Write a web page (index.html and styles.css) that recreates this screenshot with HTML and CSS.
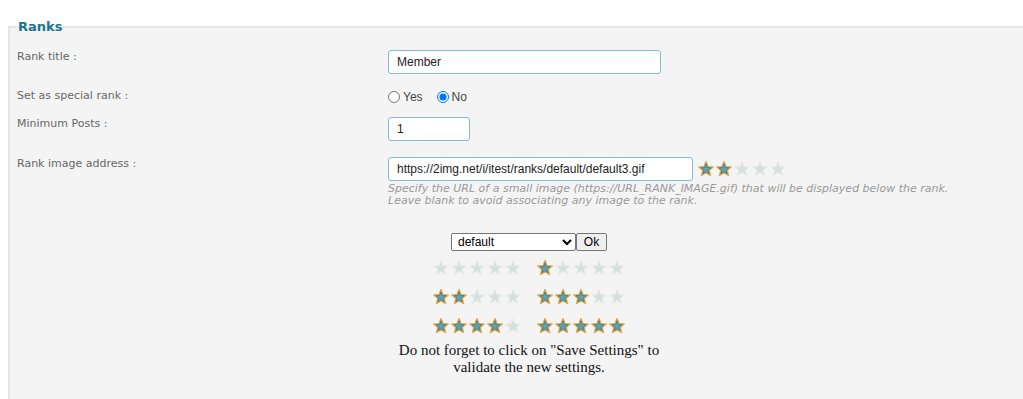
FILE: index.html
```html
<!DOCTYPE html>
<html lang="en">
<head>
<meta charset="utf-8">
<title>Ranks</title>
<link rel="stylesheet" href="styles.css">
</head>
<body>
<svg class="defs" width="0" height="0" aria-hidden="true">
  <defs>
    <symbol id="s-on" viewBox="0 0 18 16">
      <polygon points="9,0.8 10.88,5.71 16.13,5.98 12.04,9.29 13.41,14.37 9,11.5 4.59,14.37 5.96,9.29 1.87,5.98 7.12,5.71" fill="#4d93a9" stroke="#e2a94a" stroke-width="1.6" stroke-linejoin="round"/>
      <polygon points="9,2.6 10.3,6.5 14.2,6.7 11.2,9.1 12.2,12.8 9,10.7 5.8,12.8 6.8,9.1 3.8,6.7 7.7,6.5" fill="#5aa3b8" stroke="#3f6f78" stroke-width="0.6" stroke-linejoin="round"/>
    </symbol>
    <symbol id="s-off" viewBox="0 0 18 16">
      <polygon points="9,0.8 10.88,5.71 16.13,5.98 12.04,9.29 13.41,14.37 9,11.5 4.59,14.37 5.96,9.29 1.87,5.98 7.12,5.71" fill="#d3dfe1" stroke="#e6ebe4" stroke-width="1.2" stroke-linejoin="round"/>
    </symbol>
  </defs>
</svg>
<div class="page">
  <fieldset class="panel">
    <legend class="panel-title">Ranks</legend>
    <div class="form">
      <div class="row row-title">
        <div class="label">Rank title :</div>
        <div class="value"><input class="field field-title" type="text" value="Member"></div>
      </div>
      <div class="row row-special">
        <div class="label">Set as special rank :</div>
        <div class="value radios">
          <label class="radio"><input type="radio" name="special"> Yes</label>
          <label class="radio"><input type="radio" name="special" checked> No</label>
        </div>
      </div>
      <div class="row row-posts">
        <div class="label">Minimum Posts :</div>
        <div class="value"><input class="field field-posts" type="text" value="1"></div>
      </div>
      <div class="row row-image">
        <div class="label">Rank image address :</div>
        <div class="value">
          <div class="url-line">
            <input class="field field-url" type="text" value="https://2img.net/i/itest/ranks/default/default3.gif">
            <svg class="stars" width="90" height="16" viewBox="0 0 90 16"><use href="#s-on" x="0" width="18" height="16"/><use href="#s-on" x="18" width="18" height="16"/><use href="#s-off" x="36" width="18" height="16"/><use href="#s-off" x="54" width="18" height="16"/><use href="#s-off" x="72" width="18" height="16"/></svg>
          </div>
          <p class="help">Specify the URL of a small image (https://URL_RANK_IMAGE.gif) that will be displayed below the rank.<br>Leave blank to avoid associating any image to the rank.</p>
          <div class="preview">
            <div class="picker">
              <select class="set-select"><option>default</option></select><button class="ok" type="button">Ok</button>
            </div>
            <div class="star-rows">
              <div class="star-row">
                <svg class="stars" width="90" height="16" viewBox="0 0 90 16"><use href="#s-off" x="0" width="18" height="16"/><use href="#s-off" x="18" width="18" height="16"/><use href="#s-off" x="36" width="18" height="16"/><use href="#s-off" x="54" width="18" height="16"/><use href="#s-off" x="72" width="18" height="16"/></svg>
                <svg class="stars" width="90" height="16" viewBox="0 0 90 16"><use href="#s-on" x="0" width="18" height="16"/><use href="#s-off" x="18" width="18" height="16"/><use href="#s-off" x="36" width="18" height="16"/><use href="#s-off" x="54" width="18" height="16"/><use href="#s-off" x="72" width="18" height="16"/></svg>
              </div>
              <div class="star-row">
                <svg class="stars" width="90" height="16" viewBox="0 0 90 16"><use href="#s-on" x="0" width="18" height="16"/><use href="#s-on" x="18" width="18" height="16"/><use href="#s-off" x="36" width="18" height="16"/><use href="#s-off" x="54" width="18" height="16"/><use href="#s-off" x="72" width="18" height="16"/></svg>
                <svg class="stars" width="90" height="16" viewBox="0 0 90 16"><use href="#s-on" x="0" width="18" height="16"/><use href="#s-on" x="18" width="18" height="16"/><use href="#s-on" x="36" width="18" height="16"/><use href="#s-off" x="54" width="18" height="16"/><use href="#s-off" x="72" width="18" height="16"/></svg>
              </div>
              <div class="star-row">
                <svg class="stars" width="90" height="16" viewBox="0 0 90 16"><use href="#s-on" x="0" width="18" height="16"/><use href="#s-on" x="18" width="18" height="16"/><use href="#s-on" x="36" width="18" height="16"/><use href="#s-on" x="54" width="18" height="16"/><use href="#s-off" x="72" width="18" height="16"/></svg>
                <svg class="stars" width="90" height="16" viewBox="0 0 90 16"><use href="#s-on" x="0" width="18" height="16"/><use href="#s-on" x="18" width="18" height="16"/><use href="#s-on" x="36" width="18" height="16"/><use href="#s-on" x="54" width="18" height="16"/><use href="#s-on" x="72" width="18" height="16"/></svg>
              </div>
            </div>
            <p class="notice">Do not forget to click on "Save Settings" to validate the new settings.</p>
          </div>
        </div>
      </div>
    </div>
  </fieldset>
</div>
</body>
</html>
```

FILE: styles.css
```css
html, body {
  margin: 0;
  padding: 0;
  background: #ffffff;
  overflow: hidden;
}

.defs {
  position: absolute;
  width: 0;
  height: 0;
}

.page {
  padding-left: 8px;
}

.panel {
  box-sizing: border-box;
  height: 380px;
  margin: 19px 0 0 0;
  padding: 0 0 0 7px;
  border: 2px solid #e4e4e4;
  border-right: 0;
  border-bottom: 0;
  background: #f4f4f4;
  min-width: 0;
}

.panel-title {
  padding: 0 1px;
  font-family: "DejaVu Sans", Verdana, sans-serif;
  font-weight: bold;
  font-size: 13px;
  line-height: 16px;
  color: #1b7590;
}

.form {
  padding-top: 15px;
}

.row {
  display: flex;
  align-items: flex-start;
}

.row-special { margin-top: 15px; }
.row-posts { margin-top: 12px; }
.row-image { margin-top: 16px; }

.label {
  flex: 0 0 371px;
  font-family: "DejaVu Sans", Verdana, sans-serif;
  font-size: 11px;
  line-height: 14px;
  color: #666666;
}

.value {
  flex: 1;
  font-family: "Liberation Sans", Arial, sans-serif;
  font-size: 12px;
  color: #333333;
}

.field {
  box-sizing: border-box;
  height: 24px;
  margin: 0;
  padding: 0 8px;
  border: 1px solid #86b9d3;
  border-radius: 3px;
  background: #ffffff;
  font-family: "Liberation Sans", Arial, sans-serif;
  font-size: 12px;
  color: #222222;
  outline: none;
}

.field-title { width: 273px; }
.field-posts { width: 82px; }
.field-url { width: 305px; }

.radios {
  display: flex;
  align-items: center;
  gap: 14px;
  height: 16px;
}

.radio {
  display: flex;
  align-items: center;
  gap: 3px;
  font-size: 12px;
  color: #444444;
}

.radio input {
  width: 12px;
  height: 12px;
  margin: 0;
}

.url-line {
  display: flex;
  align-items: center;
  gap: 4px;
}

.stars {
  display: block;
}

.help {
  margin: 2px 0 0 0;
  font-family: "DejaVu Sans", Verdana, sans-serif;
  font-style: italic;
  font-size: 11px;
  line-height: 12px;
  color: #999999;
}

.preview {
  width: 282px;
  margin-top: 26px;
  text-align: center;
}

.picker {
  display: flex;
  justify-content: center;
}

.set-select {
  box-sizing: border-box;
  width: 125px;
  height: 18px;
  margin: 0;
  padding: 0 2px;
  border: 1px solid #767676;
  border-radius: 2px;
  background: #ffffff;
  font-family: "Liberation Sans", Arial, sans-serif;
  font-size: 12px;
  color: #000000;
}

.ok {
  box-sizing: border-box;
  width: 31px;
  height: 18px;
  margin: 0;
  padding: 0;
  border: 1px solid #767676;
  border-radius: 2px;
  background: #efefef;
  font-family: "Liberation Sans", Arial, sans-serif;
  font-size: 12px;
  color: #000000;
}

.star-rows {
  display: flex;
  flex-direction: column;
  gap: 13px;
  margin-top: 9px;
}

.star-row {
  display: flex;
  justify-content: center;
  gap: 14px;
}

.notice {
  margin: 8px 0 0 0;
  font-family: "Liberation Serif", "Times New Roman", serif;
  font-size: 15px;
  line-height: 17px;
  color: #111111;
}
```
